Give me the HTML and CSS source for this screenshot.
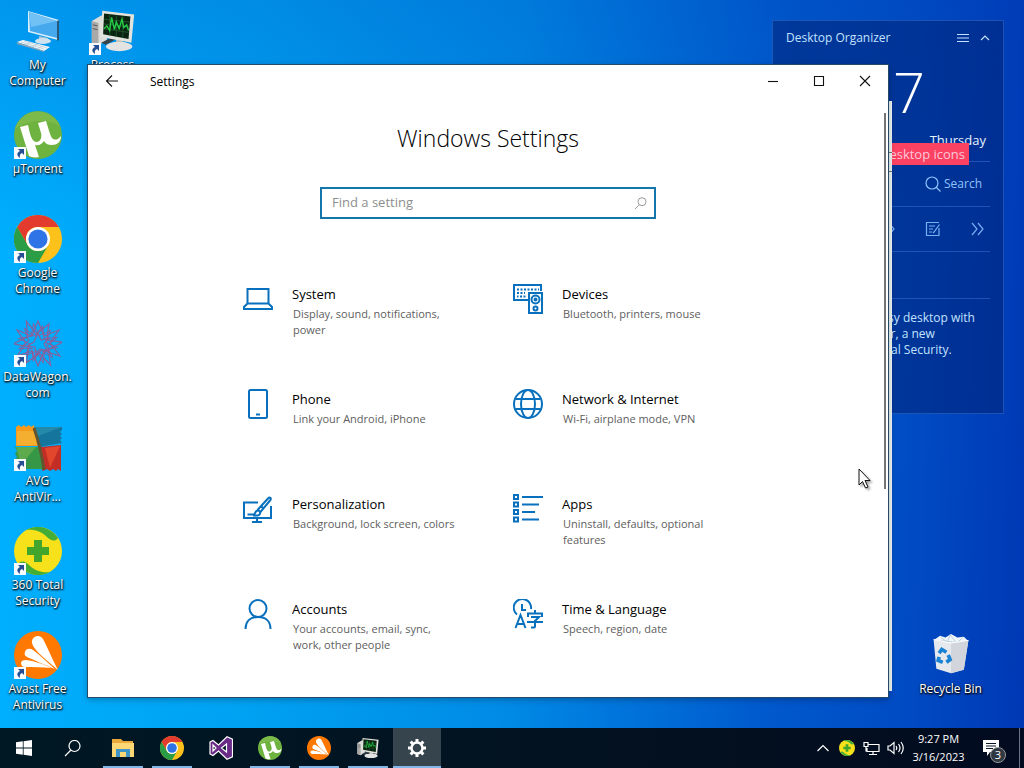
FILE: index.html
```html
<!DOCTYPE html>
<html lang="en">
<head>
<meta charset="utf-8">
<title>Settings</title>
<link rel="stylesheet" href="styles.css">
</head>
<body>
<svg class="sprite" aria-hidden="true">
  <symbol id="utorrent" viewBox="0 0 48 48">
    <circle cx="24" cy="24" r="24" fill="#6eb23f"/>
    <path d="M1 18A24 24 0 0 1 46 15C34 8 15 8 1 18z" fill="#7cba4c"/>
    <path d="M6 16l8-2c2 8 3 16 8 17 5 0 6-5 5-9l-3-10 8-2c2 6 4 14 6 17 2 2 5 2 7 0l2-2c0 6-4 9-9 9-4 0-6-1-8-4-2 3-5 5-9 4l4 12c-4 1-8 0-10-1z" fill="#fff"/>
  </symbol>
  <symbol id="chrome" viewBox="0 0 48 48">
    <circle cx="24" cy="24" r="24" fill="#fcc21b"/>
    <path d="M3.2 12A24 24 0 0 1 44.800 12H24a12 12 0 0 0-10.400 18z" fill="#e33b2e"/>
    <path d="M3.200 12A24 24 0 0 0 24 48l10.400-18a12 12 0 0 1-20.800 0z" fill="#2a9d46"/>
    <circle cx="24" cy="24" r="12" fill="#fff"/><circle cx="24" cy="24" r="9.600" fill="#2f74e6"/>
  </symbol>
  <symbol id="avast" viewBox="0 0 48 48">
    <circle cx="24" cy="24" r="24" fill="#ff7800"/>
    <path d="M18 12c-1-6 7-10 11-4 4 7 9 20 15 31C35 31 20 20 18 12zM11 21c1-4 5-4 8-2 7 5 15 13 22 19-10-4-21-9-28-12-2-1-3-3-2-5zM7 32c0-2 2-3 5-3 8 1 18 4 25 8-8-1-18-1-26-1-3 0-4-2-4-4z" fill="#fff"/>
  </symbol>
  <symbol id="total" viewBox="0 0 48 48">
    <circle cx="24" cy="24" r="24" fill="#f6e11b"/>
    <path d="M12 3A24 24 0 0 1 44 11C41 15 37 14 33 10 27 4 20 2 12 3z" fill="#43ad35"/>
    <path d="M36 45A24 24 0 0 1 4 37c3-4 7-3 11 1 6 6 13 8 21 7z" fill="#43ad35"/>
    <path d="M20 13h8v7h7v8h-7v7h-8v-7h-7v-8h7z" fill="#43a62c"/>
  </symbol>
  <symbol id="procexp" viewBox="-1 -3 51 51">
    <path d="M2 12l10-6 6 2v24l-9 6-7-3z" fill="#dcdcd8"/><path d="M2 12l7 2v24l-7-3z" fill="#a9aaa8"/><path d="M3 16l5 1m-5 3l5 1" stroke="#555"/>
    <path d="M12 35l12-6 4 2-11 6z" fill="#35434a"/>
    <path d="M28 31l7 1v6h-8z" fill="#bbbcb8"/><ellipse cx="31" cy="39" rx="14" ry="5" fill="#e3e4e1"/>
    <path d="M13 1l34 4-3 30-32-6z" fill="#e4e4df"/><path d="M15 4l28 3-2 24-27-5z" fill="#0b2412"/>
    <path d="M15 10l27 3M15 15l27 3M15 20l26 4M21 5v22M28 6v23M35 7v23" stroke="#21562c"/>
    <path d="M15 20l3-3 3 5 2-14 3 13 2-8 3 7 3-10 2 9 3-3 2 6" fill="none" stroke="#24cb45" stroke-width="1.500"/>
  </symbol>
  <symbol id="computer" viewBox="0 0 48 48">
    <path d="M14 4l31 9-1 20-30-8z" fill="#d7effb"/><path d="M15 5l28 9v17l-27-7z" fill="#46a9ee"/><path d="M15 5l28 9-26 6z" fill="#72c1f5"/>
    <path d="M45 13v20l-2 1V14z" fill="#28597d"/>
    <path d="M25 29l9 2v3l-9-1z" fill="#a9c1d1"/><ellipse cx="29" cy="34" rx="8" ry="3" fill="#cfe2ee"/>
    <path d="M3 35l6-2 27 7-6 4z" fill="#f5f8fa"/><path d="M3 35l27 9v1L3 37z" fill="#8ba5b5"/><path d="M7 35l23 7M10 34l23 7M11 38l6-3m1 5l6-3m-1 5l6-3" stroke="#b5c8d4" stroke-width=".7"/>
  </symbol>
  <symbol id="datawagon" viewBox="0 0 48 48">
    <g fill="none" stroke="#8a5f9b" stroke-width="1.200">
      <path id="star" d="M24 2l6 15 15-6-9 13 10 13-16-5-6 15-6-15-15 5 9-13L3 11l15 6z"/>
      <use href="#star" transform="rotate(30 24 24)"/><use href="#star" transform="rotate(15 24 24) scale(.8) translate(6 6)"/><use href="#star" transform="rotate(45 24 24) scale(.8) translate(6 6)"/>
      <path d="M24 14l3 7 8-2-5 6 4 7-8-2-4 6-1-8-8-1 7-4z"/>
    </g>
  </symbol>
  <symbol id="avg" viewBox="0 0 48 48">
    <path d="M2 4l3-2 2 2 3-2 2 2 3-2 2 2 3-2 4 21H2z" fill="#f69a1c"/><path d="M3 8h17l3 14H3z" fill="#f4ae30"/>
    <path d="M20 4h28v3l-2 2 2 2-2 2 2 2-2 2 2 3-23 4z" fill="#16759c"/><path d="M20 4h28L24 13z" fill="#2589aa"/>
    <path d="M27 24l20-2v26l-3-2-2 2-3-2-3 2-3-2-4 2-4-5z" fill="#c42c26"/><path d="M31 25l15-2-10 22z" fill="#e2472e"/>
    <path d="M1 24h24l4 22H7l-6-3 2-3-2-3 2-3-2-3 2-3z" fill="#369746"/><path d="M2 24h20L7 42z" fill="#5dab4c"/>
    <path d="M20 5q7 20 10 42" fill="none" stroke="#62552f" stroke-width="3"/>
  </symbol>
  <symbol id="shortcut" viewBox="0 0 12 12">
    <path d="M0 0h12v12H0z" fill="#f7fbff"/><path d="M4 2h6v6L8 6C6 7 5.500 8 6 11 3 9 2 6 6 4z" fill="#254f92"/>
  </symbol>
  <symbol id="bin" viewBox="0 0 48 48">
    <path d="M5 8l7-5 6 2 6-4 7 4 7-1 5 5-15 8z" fill="#eef5fb"/><path d="M13 5l7 5 3-8 7 9 7-6M8 8l12 1 12 2" fill="none" stroke="#b8c9d9"/>
    <path d="M5 7l19 4 19-3-5 32-14 4-16-5z" fill="#e5e8ed"/><path d="M24 11l19-3-5 32-14 4z" fill="#d2d6dc"/>
    <path d="M5 7l19 4 19-3" fill="none" stroke="#fff"/>
    <g fill="none" stroke="#1982d4" stroke-width="4"><path d="M11 22l3-4 5 3M21 24l2 5-4 3M15 32l-5-2 1-4"/></g>
  </symbol>
</svg>

<main class="desktop">
  <div class="shortcuts">
    <a class="shortcut" href="#"><svg class="art"><use href="#computer"/></svg><span>My<br>Computer</span></a>
    <a class="shortcut" href="#"><svg class="art"><use href="#utorrent"/></svg><svg class="arrow"><use href="#shortcut"/></svg><span>µTorrent</span></a>
    <a class="shortcut" href="#"><svg class="art"><use href="#chrome"/></svg><svg class="arrow"><use href="#shortcut"/></svg><span>Google<br>Chrome</span></a>
    <a class="shortcut" href="#"><svg class="art"><use href="#datawagon"/></svg><svg class="arrow"><use href="#shortcut"/></svg><span>DataWagon.<br>com</span></a>
    <a class="shortcut" href="#"><svg class="art"><use href="#avg"/></svg><svg class="arrow"><use href="#shortcut"/></svg><span>AVG<br>AntiVir...</span></a>
    <a class="shortcut" href="#"><svg class="art"><use href="#total"/></svg><svg class="arrow"><use href="#shortcut"/></svg><span>360 Total<br>Security</span></a>
    <a class="shortcut" href="#"><svg class="art"><use href="#avast"/></svg><svg class="arrow"><use href="#shortcut"/></svg><span>Avast Free<br>Antivirus</span></a>
    <a class="shortcut" href="#"><svg class="art"><use href="#procexp"/></svg><svg class="arrow"><use href="#shortcut"/></svg><span>Process<br>Explorer</span></a>
  </div>
  <a class="shortcut recycle" href="#"><svg class="art"><use href="#bin"/></svg><span>Recycle Bin</span></a>

  <aside class="organizer">
    <header><span>Desktop Organizer</span>
      <button aria-label="Menu"><svg width="12" height="10" viewBox="0 0 12 10"><path d="M0 1.500h12M0 5h12M0 8.500h12" class="line"/></svg></button>
      <button aria-label="Collapse"><svg width="10" height="10" viewBox="0 0 10 10"><path d="M1 7l4-4 4 4" class="line"/></svg></button>
    </header>
    <div class="time">9:27</div>
    <div class="day">Thursday</div>
    <div class="find"><button><svg width="16" height="16" viewBox="0 0 16 16"><path d="M11.500 11.500l4 4M13 7A6 6 0 1 1 1 7a6 6 0 0 1 12 0z" class="line"/></svg>Search</button></div>
    <div class="tools">
      <button aria-label="Tools"><svg width="16" height="16" viewBox="0 0 16 16"><path d="M8 1l6 7-6 7" class="line"/></svg></button>
      <button aria-label="Notes"><svg width="16" height="16" viewBox="0 0 16 16"><path d="M14 7v7.500H1.500v-13H14M4 5h6M4 8h4M4 11h3M14.500 3.500L9 11l-1 1" class="line"/></svg></button>
      <button aria-label="More"><svg width="16" height="16" viewBox="0 0 16 16"><path d="M2 2l5 6-5 6M8 2l5 6-5 6" class="line"/></svg></button>
    </div>
    <div class="blank"></div>
    <p>Now enjoy the easy desktop with<br>Desktop Organizer, a new<br>feature of 360 Total Security.</p>
  </aside>
  <div class="tip">Clear desktop icons</div>
  <div class="behind"><i></i></div>

  <section class="window">
    <header class="titlebar">
      <button class="back" aria-label="Back"><svg width="14" height="14" viewBox="0 0 14 14"><path d="M13 7H1.500M7 1.500L1.500 7 7 12.500"/></svg></button>
      <span class="caption">Settings</span>
      <button aria-label="Minimize"><svg width="12" height="12" viewBox="0 0 12 12"><path d="M1 6.500h10"/></svg></button>
      <button aria-label="Maximize"><svg width="12" height="12" viewBox="0 0 12 12"><path d="M1.500 1.500h9v9h-9z"/></svg></button>
      <button aria-label="Close"><svg width="12" height="12" viewBox="0 0 12 12"><path d="M1 1l10 10M11 1L1 11"/></svg></button>
    </header>
    <div class="content">
      <h1>Windows Settings</h1>
      <label class="search"><input type="text" placeholder="Find a setting" aria-label="Find a setting"><svg width="13" height="13" viewBox="0 0 13 13"><path d="M4.800 8.200L1 12M12 4.700a4 4 0 1 1-8 0 4 4 0 0 1 8 0z"/></svg></label>
      <nav class="categories">
        <a href="#"><svg viewBox="0 0 30 30"><path d="M4.500 5h21v14.500h-21zM4.500 19.500L1 23v2h28v-2l-3.500-3.500"/></svg><div><h2>System</h2><p>Display, sound, notifications, power</p></div></a>
        <a href="#"><svg viewBox="0 0 30 30"><path d="M15 16H1V1h27v6M16 9h13v20H16z"/><path d="M4 5.500h22M4 9h8M4 12.500h1.500M7 12.500h6" stroke-dasharray="2 1.500"/><circle cx="22.500" cy="15.500" r="4"/><circle cx="22.500" cy="24.500" r="2"/><circle cx="22.500" cy="15.500" r="1" fill="currentColor"/></svg><div><h2>Devices</h2><p>Bluetooth, printers, mouse</p></div></a>
        <a href="#"><svg viewBox="0 0 30 30"><rect x="6" y="1" width="18" height="28" rx="1.500"/><path d="M13 25.500h4"/></svg><div><h2>Phone</h2><p>Link your Android, iPhone</p></div></a>
        <a href="#"><svg viewBox="0 0 30 30"><circle cx="15" cy="15" r="14"/><ellipse cx="15" cy="15" rx="7" ry="14"/><path d="M2.500 10h25M2.500 20h25"/></svg><div><h2>Network &amp; Internet</h2><p>Wi-Fi, airplane mode, VPN</p></div></a>
        <a href="#"><svg viewBox="0 0 30 30"><path d="M15 8.500H1V24h27V12M14 24v4M9 28h10M4.500 20.500h6.500c1 0 1-4 4-4s3 5-1 5H10M14.500 16L25 4.500c2-2 4 0 2 2L17 18.500M18 12l3 3"/></svg><div><h2>Personalization</h2><p>Background, lock screen, colors</p></div></a>
        <a href="#"><svg viewBox="0 0 30 30"><path d="M1 1h4v4H1zM1 8.500h4v4H1zM1 16h4v4H1zM1 23.500h4v4H1zM9 3h21M9 10.500h17M9 18h13M9 25.500h17"/></svg><div><h2>Apps</h2><p>Uninstall, defaults, optional features</p></div></a>
        <a href="#"><svg viewBox="0 0 30 30"><circle cx="15" cy="9.500" r="8.500"/><path d="M2.500 30c0-8 5-12 12.500-12s12.500 4 12.500 12"/></svg><div><h2>Accounts</h2><p>Your accounts, email, sync, work, other people</p></div></a>
        <a href="#"><svg viewBox="0 0 30 30"><path d="M4 15.500A8.700 8.700 0 1 1 18 10M9 5v6h4M2.500 29l5-13 5 13M4 25h7M22 11v3M15 18v-3.500h14V18M18 18h8l-4 4v5.500c0 1.500-2 1-4 1M14 23h16"/></svg><div><h2>Time &amp; Language</h2><p>Speech, region, date</p></div></a>
      </nav>
    </div>
    <div class="thumb"></div>
  </section>
  <svg class="cursor" width="14" height="21" viewBox="0 0 14 21"><path d="M1 1v16l3.500-3.500L7.500 20l2.500-1-3-6.500h5z" fill="#fff" stroke="#111"/></svg>
</main>

<footer class="taskbar">
  <button aria-label="Start"><svg width="16" height="16" viewBox="0 0 16 16"><path d="M0 2.300L6.800 1.300v6.300H0zM7.600 1.200L16 0v7.600H7.600zM0 8.400h6.800v6.300L0 13.700zM7.600 8.400H16V16l-8.400-1.200z" fill="#fff"/></svg></button>
  <button aria-label="Search"><svg width="17" height="17" viewBox="0 0 17 17"><path d="M7 10L1 16M16 6A5.500 5.500 0 1 1 5 6a5.500 5.500 0 0 1 11 0z" class="white"/></svg></button>
  <div class="apps">
    <button class="open" aria-label="File Explorer"><svg width="22" height="20" viewBox="0 0 22 20"><path d="M0 1h9l2 2h10v15H0z" fill="#e9a83a"/><path d="M0 5h22v14H0z" fill="#fbd875"/><path d="M4 19v-8h14v8h-4v-5H8v5z" fill="#3e94c7"/></svg></button>
    <button class="open" aria-label="Google Chrome"><svg width="24" height="24"><use href="#chrome"/></svg></button>
    <button aria-label="Visual Studio"><svg width="24" height="24" viewBox="0 0 24 24"><path fill-rule="evenodd" d="M1 6l3-1.500 5.500 4.500L18 .8l5.500 2.500v17.400L18 23.200 9.500 15 4 19.500 1 18zM4 9v6l3-3zM17.500 8l-5 4 5 4z" fill="#692b87" stroke="#fff" stroke-width="1.200"/></svg></button>
    <button class="open" aria-label="µTorrent"><svg width="24" height="24"><use href="#utorrent"/></svg></button>
    <button class="open" aria-label="Avast"><svg width="24" height="24"><use href="#avast"/></svg></button>
    <button class="open" aria-label="Process Explorer"><svg width="24" height="24"><use href="#procexp"/></svg></button>
    <button class="open current" aria-label="Settings"><svg width="20" height="20" viewBox="0 0 20 20"><circle cx="10" cy="10" r="5.500" fill="none" stroke="#fff" stroke-width="2.500"/><path d="M10 1v3M10 16v3M1 10h3M16 10h3M3.600 3.600l2.200 2.200M14.200 14.200l2.200 2.200M3.600 16.400l2.200-2.200M14.200 5.800l2.200-2.200" stroke="#fff" stroke-width="3"/></svg></button>
  </div>
  <div class="tray">
    <button aria-label="Show hidden icons"><svg width="12" height="8" viewBox="0 0 12 8"><path d="M.5 7L6 1.500 11.500 7" class="white"/></svg></button>
    <button aria-label="360 Total Security"><svg width="16" height="16"><use href="#total"/></svg></button>
    <button aria-label="Network"><svg width="17" height="15" viewBox="0 0 17 15"><path d="M5 3.500h11v7H4V7M10 10.500v3M6 13.500h8M1 1.500h4v4H1zM3 5.500v5" class="white"/></svg></button>
    <button aria-label="Volume"><svg width="17" height="14" viewBox="0 0 17 14"><path d="M1 5h2l4-3.500v11L3 9H1zM9 5q1.500 2 0 4M11.500 3q3 4 0 8M14 1q4.500 6 0 12" class="white"/></svg></button>
    <button class="clock">9:27 PM<br>3/16/2023</button>
    <button class="notes" aria-label="Notifications"><svg width="16" height="16" viewBox="0 0 16 16"><path d="M0 0h16v12H7l-3 4v-4H0z" fill="#fff"/><path d="M3 3.500h10M3 6h10M3 8.500h7" stroke="#0b1626"/></svg><b>3</b></button>
    <button class="peek" aria-label="Show desktop"></button>
  </div>
</footer>
</body>
</html>
```

FILE: styles.css
```css
* { box-sizing: border-box; }
body {
  margin: 0;
  min-height: 100vh;
  display: flex;
  flex-direction: column;
  font: 12px/16px "Open Sans", "Noto Sans", sans-serif;
  overflow: hidden;
}
button { border: 0; padding: 0; background: none; color: inherit; font: inherit; display: flex; align-items: center; justify-content: center; }
a { color: inherit; text-decoration: none; }
h1, h2, p { margin: 0; font-weight: 400; }
.sprite { position: absolute; width: 0; height: 0; }
.desktop {
  flex: 1;
  position: relative;
  overflow: hidden;
  background:
    linear-gradient(180deg, rgba(0,60,180,.22), transparent 35%),
    linear-gradient(92deg, #00b0ff 0%, #00a2f2 25%, #008be6 50%, #0058cc 76%, #004cc4 88%, #0038b4 100%);
}

/* Desktop shortcuts */
.shortcuts { display: grid; grid-template-rows: repeat(7, 104px); grid-auto-flow: column; grid-auto-columns: 75px; width: max-content; }
.shortcut {
  position: relative;
  display: flex;
  flex-direction: column;
  align-items: center;
  gap: 2px;
  padding-top: 7px;
  color: #fff;
  text-align: center;
  text-shadow: 1px 1px 2px #000, 0 1px 2px #000;
}
.art { width: 48px; height: 48px; flex: none; }
.arrow { position: absolute; left: 14px; top: 43px; width: 12px; height: 12px; }
.recycle { position: absolute; right: 36px; bottom: 31px; width: 75px; }
.recycle .art { width: 44px; }

/* Desktop organizer */
.organizer {
  position: absolute;
  top: 20px;
  right: 20px;
  width: 232px;
  height: 394px;
  padding: 0 13px;
  border: 1px solid rgba(80,150,240,.35);
  background: rgba(0,34,116,.55);
  color: #c3e2ff;
}
.organizer header { display: flex; align-items: center; gap: 11px; height: 34px; }
.organizer header span { flex: 1; }
.line { fill: none; stroke: currentColor; stroke-width: 1.2; }
.time { height: 76px; padding-right: 65px; font-size: 56px; line-height: 72px; font-weight: 300; text-align: right; color: #fff; }
.day { height: 31px; padding: 0 4px 0 0; text-align: right; font-size: 13px; line-height: 18px; color: #e4f3ff; border-bottom: 1px solid rgba(80,150,240,.35); }
.find, .tools, .blank { height: 45px; border-bottom: 1px solid rgba(80,150,240,.35); display: flex; justify-content: flex-end; }
.find { padding-right: 8px; color: #90c2fa; }
.find button { gap: 3px; }
.tools { gap: 29px; padding-right: 4px; color: #78aef2; }
.blank { height: 47px; }
.organizer p { padding: 11px 0 0 5px; white-space: nowrap; }
.tip { position: absolute; top: 143px; right: 55px; padding: 3px 4px; background: #fb4262; color: #ffc6da; font-size: 13px; line-height: 16px; }

/* Windows */
.behind { position: absolute; left: 120px; right: 132px; top: 101px; bottom: 37px; background: #eef6f4; }
.behind i { display: block; margin-top: 51px; height: 20px; border: solid #69756d; border-width: 1px 0; }
.window { position: absolute; left: 87px; right: 135px; top: 64px; bottom: 30px; background: #fff; border: 1px solid #274968; box-shadow: 0 2px 6px rgba(0,0,0,.25); }
.titlebar { display: flex; height: 32px; color: #000; }
.titlebar button { width: 46px; }
.titlebar svg { fill: none; stroke: #111; stroke-width: 1.1; }
.titlebar .back { width: 48px; }
.caption { flex: 1; padding-left: 14px; line-height: 33px; }
.content { display: flex; flex-direction: column; align-items: center; padding-top: 24px; }
h1 { font-size: 23px; line-height: 34px; font-weight: 300; }
.search { display: flex; align-items: center; width: 336px; height: 32px; margin-top: 32px; padding: 0 7px 0 10px; border: 2px solid #1477ab; }
.search input { flex: 1; min-width: 0; padding: 0 0 2px; border: 0; outline: 0; background: none; font: 13px/20px "Open Sans", sans-serif; }
.search input::placeholder { color: #8e8e8e; opacity: 1; }
.search svg { fill: none; stroke: #999; }
.categories { display: grid; grid-template-columns: repeat(2, 270px); grid-auto-rows: 105px; margin-top: 65px; }
.categories a { display: flex; gap: 19px; padding: 0 30px 0 25px; }
.categories svg { flex: none; width: 30px; height: 30px; color: #0870bd; fill: none; stroke: currentColor; stroke-width: 2; }
.categories h2 { font-size: 13px; line-height: 20px; color: #000; }
.categories p { margin-top: 2px; padding-left: 1px; font-size: 11px; color: #606060; }
.thumb { position: absolute; right: 2px; top: 48px; width: 2px; height: 376px; background: #747474; }
.cursor { position: absolute; left: 858px; top: 468px; filter: drop-shadow(2px 2px 1px rgba(0,0,0,.35)); }

/* Taskbar */
.taskbar { display: flex; height: 40px; background: linear-gradient(90deg, #001824, #03101f 70%, #020b20); color: #fff; }
.taskbar > button { width: 48px; }
.white { fill: none; stroke: #fff; stroke-width: 1.2; }
.apps { display: flex; gap: 1px; flex: 1; padding-left: 3px; }
.apps button { width: 48px; background: linear-gradient(#81b6e8, #81b6e8) center bottom / 0 2px no-repeat; }
.apps .open { background-size: 40px 2px; }
.apps .current { background-color: #36454d; background-size: 48px 2px; }
.tray { display: flex; }
.tray button { width: 24px; }
.tray .clock { width: 63px; font-size: 11px; line-height: 18px; text-align: center; }
.tray .notes { position: relative; width: 49px; padding-right: 8px; }
.notes b { position: absolute; left: 20px; top: 19px; width: 16px; height: 16px; border: 1px solid #999; border-radius: 8px; background: #303842; font-weight: 400; font-size: 11px; line-height: 14px; }
.tray .peek { width: 5px; border-left: 1px solid #687684; }
```
